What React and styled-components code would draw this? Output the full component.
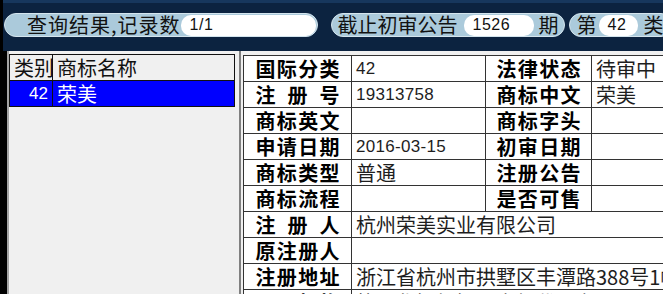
import React from 'react';
import styled, { createGlobalStyle } from 'styled-components';

const CJK = `"Noto Sans CJK SC", "Noto Sans", sans-serif`;
const NUM = `"Liberation Sans", "Noto Sans CJK SC", sans-serif`;

const Global = createGlobalStyle`
  html, body { margin: 0; padding: 0; background: #0c2340; }
  body { width: 663px; height: 294px; overflow: hidden; }
`;

const Screen = styled.div`
  width: 663px;
  height: 294px;
  overflow: hidden;
  box-sizing: border-box;
  display: flex;
  flex-direction: column;
  background: #0c2340;
  border-left: 3px solid #000;
  font-family: ${CJK};
`;

const TopBar = styled.div`
  flex: none;
  height: 51px;
  box-sizing: border-box;
  border-top: 3px solid #17375d;
  padding-bottom: 4px;
  display: flex;
  align-items: center;
  white-space: nowrap;
`;

const Pill = styled.div`
  flex: none;
  display: flex;
  align-items: center;
  height: 24px;
  box-sizing: border-box;
  border-radius: 12px;
  background: #abcadb;
  border: 1px solid #d4e5ee;
  margin-left: ${(p) => p.$ml}px;
  padding: 0 ${(p) => p.$pr}px 0 ${(p) => p.$pl}px;
`;

const PillLabel = styled.span`
  font-size: 20px;
  line-height: 24px;
  color: #121212;
  letter-spacing: ${(p) => (p.$spaced ? 1 : 0)}px;
  margin-right: ${(p) => p.$mr || 0}px;
  margin-left: ${(p) => p.$ml || 0}px;
`;

const Field = styled.span`
  display: flex;
  align-items: center;
  width: ${(p) => p.$w}px;
  height: 21px;
  box-sizing: border-box;
  padding-left: 9px;
  background: #fff;
  border-radius: 10px;
  font-family: ${NUM};
  font-size: 16px;
  letter-spacing: 0.5px;
  color: #111;
`;

const Main = styled.div`
  flex: 1;
  min-height: 0;
  display: flex;
  background: #f0f0f0;
  border-left: 4px solid #000;
`;

const LeftPanel = styled.div`
  flex: none;
  width: 234px;
  box-sizing: border-box;
  border-left: 2px solid #a4a4a4;
  border-right: 2px solid #808080;
  padding-top: 3px;
  background: #f0f0f0;
`;

const ListGrid = styled.table`
  width: 226px;
  border-collapse: collapse;
  table-layout: fixed;
`;

const ListCell = styled.td`
  height: 25px;
  padding: 0 4px;
  border: 1px solid #111;
  font-size: ${(p) => (p.$num ? 17 : 20)}px;
  line-height: 24px;
  white-space: nowrap;
  overflow: hidden;
  text-align: ${(p) => (p.$right ? 'right' : 'left')};
  color: ${(p) => (p.$selected ? '#fff' : '#111')};
  background: ${(p) => (p.$selected ? '#0000ff' : '#f0f0f0')};
  font-family: ${(p) => (p.$num ? NUM : CJK)};
`;

const RightPanel = styled.div`
  flex: 1;
  min-width: 0;
  overflow: hidden;
  padding: 4px 0 0 2px;
`;

const DataTable = styled.table`
  width: 470px;
  border-collapse: collapse;
  table-layout: fixed;
  background: #fff;
`;

const LabelCell = styled.td`
  height: 25px;
  padding: 0;
  border: 1px solid #333;
  text-align: center;
  font-size: 20px;
  line-height: 24px;
  font-weight: 700;
  color: #000;
`;

const LabelText = styled.span`
  display: inline-block;
  width: 84px;
  text-align: justify;
  text-align-last: justify;
  white-space: nowrap;
`;

const ValueCell = styled.td`
  height: 25px;
  padding: 0 0 0 4px;
  border: 1px solid #333;
  white-space: nowrap;
  overflow: hidden;
  color: #1e1e1e;
  font-family: ${(p) => (p.$num ? NUM : CJK)};
  font-size: ${(p) => (p.$num ? 17 : 20)}px;
  letter-spacing: ${(p) => (p.$num ? 0.3 : 0)}px;
  line-height: 24px;
`;

const rows = [
  ['国际分类', '42', '法律状态', '待审中'],
  ['注 册 号', '19313758', '商标中文', '荣美'],
  ['商标英文', '', '商标字头', ''],
  ['申请日期', '2016-03-15', '初审日期', ''],
  ['商标类型', '普通', '注册公告', ''],
  ['商标流程', '', '是否可售', ''],
  ['注 册 人', '杭州荣美实业有限公司'],
  ['原注册人', ''],
  ['注册地址', '浙江省杭州市拱墅区丰潭路388号1幢'],
  ['代理机构', '杭州华知标知识产权代理有限公司'],
];

const isNum = (v) => v !== '' && /^[0-9\-/]+$/.test(v);

export default function App() {
  return (
    <>
      <Global />
      <Screen>
        <TopBar>
          <Pill $ml={1} $pl={22} $pr={1}>
            <PillLabel $spaced>查询结果,记录数</PillLabel>
            <Field $w={135}>1/1</Field>
          </Pill>
          <Pill $ml={13} $pl={6} $pr={5}>
            <PillLabel $mr={6}>截止初审公告</PillLabel>
            <Field $w={70}>1526</Field>
            <PillLabel $ml={5}>期</PillLabel>
          </Pill>
          <Pill $ml={4} $pl={7} $pr={8}>
            <PillLabel $mr={2}>第</PillLabel>
            <Field $w={39}>42</Field>
            <PillLabel $ml={6}>类</PillLabel>
          </Pill>
        </TopBar>
        <Main>
          <LeftPanel>
            <ListGrid>
              <colgroup>
                <col style={{ width: 43 }} />
                <col />
              </colgroup>
              <tbody>
                <tr>
                  <ListCell>类别</ListCell>
                  <ListCell>商标名称</ListCell>
                </tr>
                <tr>
                  <ListCell $selected $right $num>42</ListCell>
                  <ListCell $selected>荣美</ListCell>
                </tr>
              </tbody>
            </ListGrid>
          </LeftPanel>
          <RightPanel>
            <DataTable>
              <colgroup>
                <col style={{ width: 108 }} />
                <col style={{ width: 134 }} />
                <col style={{ width: 106 }} />
                <col style={{ width: 122 }} />
              </colgroup>
              <tbody>
                {rows.map((r, i) => (
                  <tr key={i}>
                    <LabelCell>
                      <LabelText>{r[0]}</LabelText>
                    </LabelCell>
                    {r.length === 4 ? (
                      <>
                        <ValueCell $num={isNum(r[1])}>{r[1]}</ValueCell>
                        <LabelCell>
                          <LabelText>{r[2]}</LabelText>
                        </LabelCell>
                        <ValueCell>{r[3]}</ValueCell>
                      </>
                    ) : (
                      <ValueCell colSpan={3}>{r[1]}</ValueCell>
                    )}
                  </tr>
                ))}
              </tbody>
            </DataTable>
          </RightPanel>
        </Main>
      </Screen>
    </>
  );
}
